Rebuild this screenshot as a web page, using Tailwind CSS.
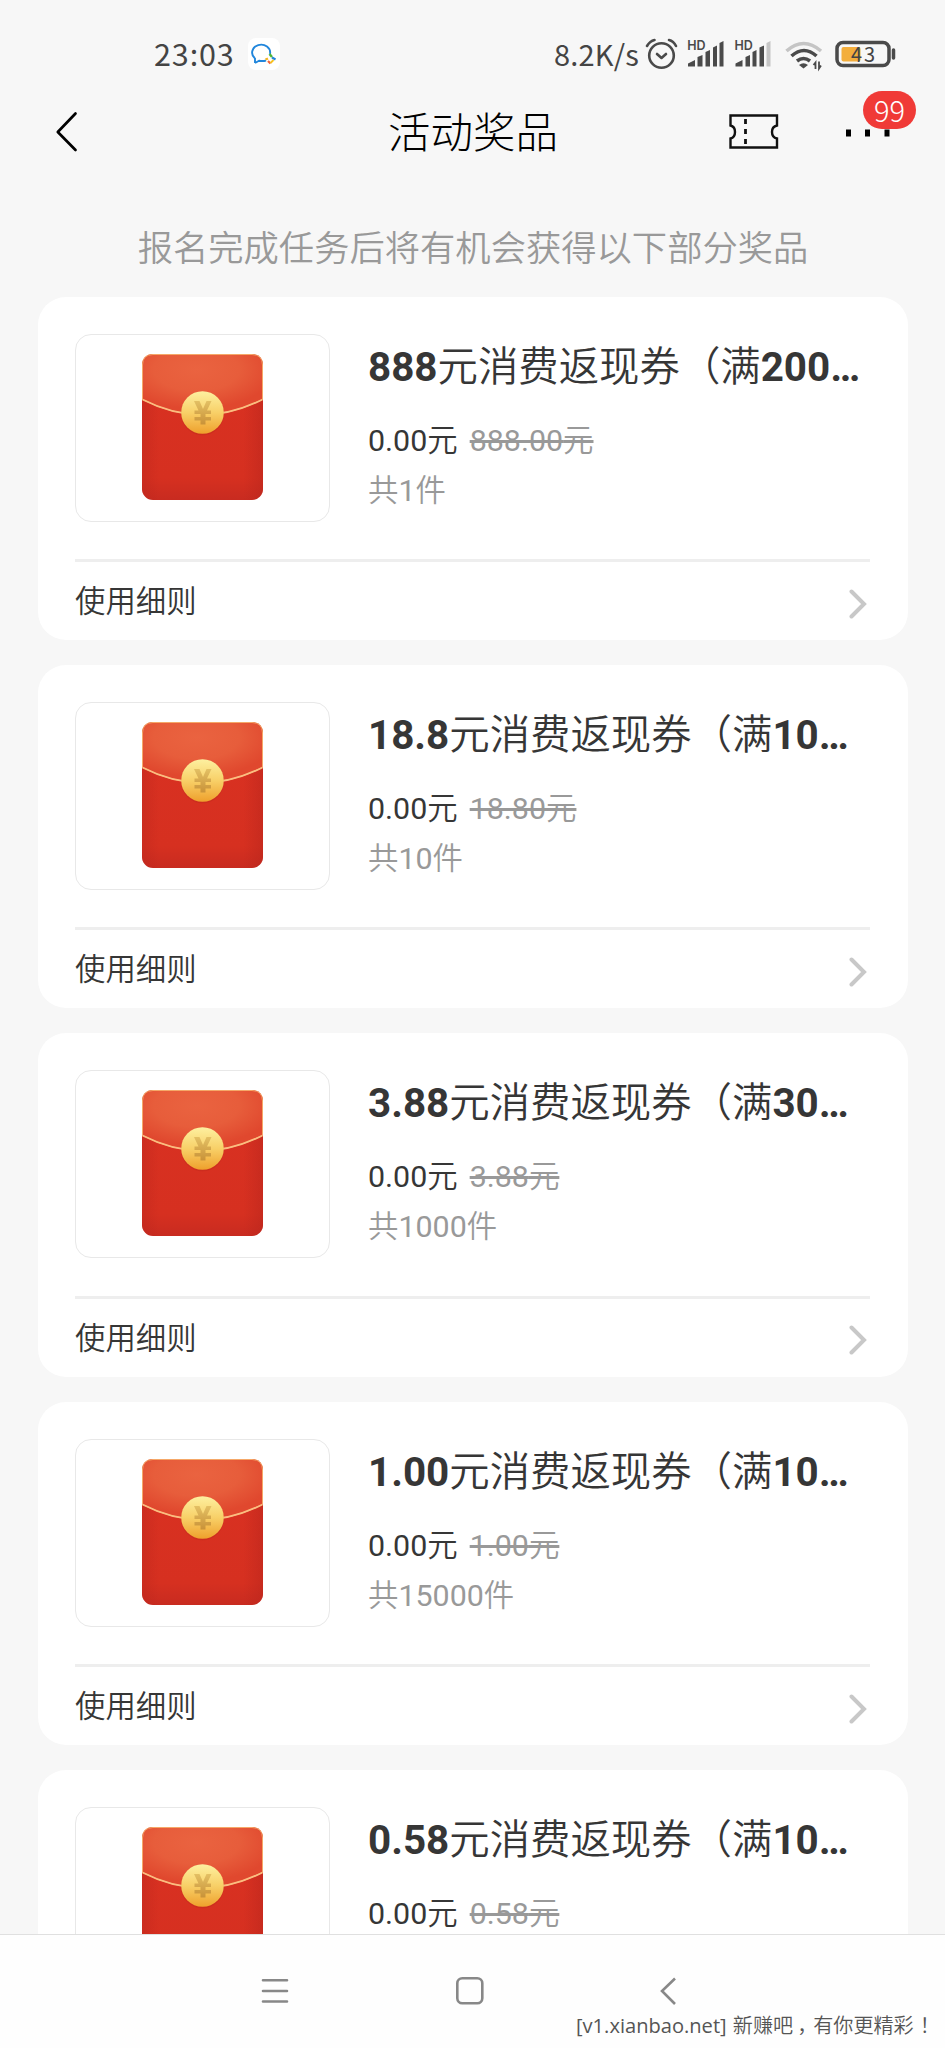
<!DOCTYPE html>
<html lang="zh-CN">
<head>
<meta charset="utf-8">
<title>活动奖品</title>
<script src="https://cdn.jsdelivr.net/npm/@tailwindcss/browser@4"></script>
</head>
<body class="bg-[#f7f7f7]">
<div class="flex h-[2048px] w-[945px] flex-col overflow-hidden font-['Roboto','Noto_Sans_CJK_SC',sans-serif] text-[#363636]">
  <!-- status bar -->
  <div class="flex h-[84px] shrink-0 items-start justify-between pt-[34px] pl-[154px] pr-[48px] font-['Noto_Sans_CJK_SC',sans-serif] text-[#444]">
    <div class="flex items-center">
      <span class="-mt-px w-[94px] text-[30.500px] leading-[40px] tracking-[0.9px]">23:03</span>
      <svg class="h-8 w-8" viewBox="0 0 32 32" fill="none">
        <rect width="32" height="32" rx="8" fill="#fff"/>
        <path d="M7 25v-4.500A9 8 0 1 1 22 16M7 25l4-2.300q4 .8 7-.2" stroke="#2186dc" stroke-width="1.900" stroke-linejoin="round"/>
        <path d="M21.500 16l2.500 3" stroke="#53b535" stroke-width="2.400"/><path d="M24 19.500l3.500 2" stroke="#2186dc" stroke-width="2.200"/><path d="M20 20.500l-2.500 1" stroke="#f7b51e" stroke-width="2.400"/><path d="M20 23l2.500 2.500" stroke="#f3663a" stroke-width="2.200"/><path d="M22.500 25l3-3" stroke="#f7c11e" stroke-width="1.800"/>
      </svg>
    </div>
    <div class="flex">
      <span class="-mt-[1px] w-[90px] whitespace-nowrap text-[29px] leading-[40px] tracking-[0.2px]">8.2K/s</span>
      <svg class="h-[40px] w-[253px]" viewBox="644 34 253 40" fill="none">
        <g stroke="#4a4a4a" stroke-width="2.600" stroke-linecap="round" stroke-linejoin="round"><circle cx="661.500" cy="55.500" r="12.300"/><path d="M657 54l4.500 4 4.500-4M647 46q3-5 7.500-6M669 40q4.500 1 7 6"/></g>
        <g fill="#4a4a4a"><path d="M688 66.500v-3l7-3.500v6.500zM697.500 57l5-2v11.500h-5zM705.500 52l4.500-2v16.500h-4.500zM713 47.500l4-2v21h-4zM719.500 43l4-2v25.500h-4z"/><path d="M735.500 66.500v-3l7-3.500v6.500zM745.500 57l4.500-2v11.500h-4.500zM752.500 52l4-2v16.500h-4zM759.500 47.500l4.500-2v21h-4.500z"/></g>
        <path d="M766.500 43l4-2v25.500h-4z" fill="#c5c5c5"/>
        <g font-family="Inter" font-weight="600" font-size="12.500" fill="#4a4a4a"><text x="687.300" y="49.500">HD</text><text x="734.500" y="49.500">HD</text></g>
        <path d="M786.500 51q17-15 34.500 0" stroke="#c5c5c5" stroke-width="3.600"/><path d="M791.500 56q12.500-11 25 0M797 61q6.500-5 13 0" stroke="#4a4a4a" stroke-width="3.600"/><path d="M799 65q4.500-3.500 9 0l-4.500 3.500z" fill="#4a4a4a"/>
        <path d="M815.500 69v-6.500l-2 2.500M819 61.500v7l2-3" stroke="#4a4a4a" stroke-width="1.800"/>
        <rect x="837" y="42.500" width="52" height="23" rx="6" stroke="#4a4a4a" stroke-width="3.500"/><rect x="841.500" y="47" width="19" height="14.500" rx="2" fill="#f3ae3c"/><path d="M893.500 50v8" stroke="#4a4a4a" stroke-width="3.500" stroke-linecap="round"/>
        <text x="851" y="62" font-family="Noto Sans CJK SC" font-size="20" textLength="24" fill="#444">43</text>
      </svg>
    </div>
  </div>
  <!-- title bar -->
  <div class="flex h-[98px] shrink-0 items-center justify-between pl-[50px] text-black">
    <svg class="h-[98px] w-[338px]" viewBox="50 84 338 98" fill="none"><path d="M75.500 113.500L57.800 132L75.500 150" stroke="#000" stroke-width="2.700" stroke-linecap="round" stroke-linejoin="round"/></svg>
    <h1 class="w-[172px] pt-[2px] whitespace-nowrap text-[42.500px] leading-[96px] font-light">活动奖品</h1>
    <div class="relative h-[98px] w-[385px]">
      <svg class="h-[98px] w-[385px]" viewBox="560 84 385 98" fill="none"><path d="M730.500 115.500h46.500v10q-5 1-5 6.500t5 6.500v9h-46.500v-9q4.500-1 4.500-6.500t-4.500-6.500z" stroke="#111" stroke-width="2.400"/><path d="M745.500 119v5M745.500 129v5M745.500 139v5" stroke="#111" stroke-width="2.800"/><path d="M846 129.500h5v7h-5zM865 129.500h5v7h-5zM884.500 129.500h5v7h-5z" fill="#000"/></svg>
      <span class="absolute top-[7px] left-[303px] h-[38px] w-[53px] rounded-full bg-[#f03a37] text-center font-['Noto_Sans_CJK_SC'] text-[29px] leading-[37px] font-light text-white">99</span>
    </div>
  </div>
  <p class="h-[114.700px] shrink-0 pt-[42px] pl-[1px] text-center text-[35.300px] leading-[50px] font-[350] text-[#999]">报名完成任务后将有机会获得以下部分奖品</p>
  <main id="cards" class="flex min-h-0 flex-1 flex-col gap-[25px] overflow-hidden px-[37.500px]"></main>
  <!-- navigation bar -->
  <nav class="relative h-[114px] shrink-0 border-t border-[#e0e0e0] bg-[#fefefe]">
    <svg class="h-[113px] w-full" viewBox="0 1935 945 113" fill="none" stroke="#888" stroke-width="2.600" stroke-linecap="round"><path d="M263 1980.300h24M263 1991h24M263 2001.500h24"/><rect x="457.300" y="1978.300" width="25" height="25" rx="5"/><path d="M675 1978.500L662 1991L675 2004" stroke-linecap="butt"/></svg>
    <p class="absolute top-[74px] left-[576px] text-[20.100px] leading-[32px] whitespace-nowrap text-[#555] font-['Open_Sans','Noto_Sans_CJK_SC',sans-serif]">[v1.xianbao.net] <span class="ml-[1px] font-[350] font-['Noto_Sans_CJK_SC']">新赚吧<span class="-mr-[4px] pl-[4px]">，</span>有你更精彩<span class="-mr-[6px] pl-[6px]">！</span></span></p>
  </nav>
</div>
<!-- gradients shared by the red packets -->
<svg class="absolute top-0 left-0 h-0 w-0">
  <defs>
    <linearGradient id="body" x1="0" y1="0" x2="0" y2="1"><stop offset="0" stop-color="#d93122"/><stop offset=".85" stop-color="#d63020"/><stop offset="1" stop-color="#c82b20"/></linearGradient>
    <linearGradient id="sides" x1="0" y1="0" x2="1" y2="0"><stop offset="0" stop-color="#b5241c" stop-opacity=".35"/><stop offset=".14" stop-color="#b5241c" stop-opacity="0"/><stop offset=".84" stop-color="#b5241c" stop-opacity="0"/><stop offset="1" stop-color="#b5241c" stop-opacity=".45"/></linearGradient>
    <radialGradient id="flap" cx=".45" cy=".25" r=".65"><stop offset="0" stop-color="#ea6340"/><stop offset=".55" stop-color="#e75d3b"/><stop offset="1" stop-color="#e0482e"/></radialGradient>
    <linearGradient id="coin" x1="0" y1="0" x2="0" y2="1"><stop offset="0" stop-color="#fdf0a0"/><stop offset=".5" stop-color="#f8d068"/><stop offset="1" stop-color="#eea02c"/></linearGradient>
    <linearGradient id="yen" x1="0" y1="0" x2="0" y2="1"><stop offset="0" stop-color="#e3c064"/><stop offset="1" stop-color="#c99238"/></linearGradient>
  </defs>
</svg>
<script>
const prizes = [
  ['888', '200', '888.00', 1],
  ['18.8', '10', '18.80', 10],
  ['3.88', '30', '3.88', 1000],
  ['1.00', '10', '1.00', 15000],
  ['0.58', '10', '0.58'],
];
document.getElementById('cards').innerHTML = prizes.map(([amount, min, price, count]) => `
  <section class="h-[343.400px] shrink-0 rounded-[28px] bg-white px-[37.500px] pt-[37px]">
    <div class="flex h-[225.400px] gap-[38.500px]">
      <div class="flex h-[188px] w-[254.500px] shrink-0 justify-center rounded-[16px] border border-[#e8e8e8] pt-[19px]">
        <svg class="h-[146px] w-[121px]" viewBox="0 0 121 146">
          <rect width="121" height="146" rx="11" fill="url(#body)"/><rect width="121" height="146" rx="11" fill="url(#sides)"/>
          <path d="M.5 45.500V11Q.5.5 11 .5H110Q120.500.5 120.500 11V45.500Q60 76 .5 45.500z" fill="url(#flap)" stroke="#f5a868" stroke-width="1"/>
          <path d="M.5 45.500Q60 76 120.500 45.500" fill="none" stroke="#fbbd80" stroke-width="1.800"/>
          <circle cx="60.500" cy="60" r="21.300" fill="#b5241c" opacity=".3"/>
          <circle cx="60.500" cy="58.500" r="21.300" fill="url(#coin)"/>
          <path d="M52 47h5.500l3.500 8 3.500-8h5l-4.500 9.500h4v3.500h-5.500v3h5.500v3.500h-5.500v4h-5v-4h-6v-3.500h6v-3h-6v-3.500h4z" fill="url(#yen)"/>
        </svg>
      </div>
      <div class="whitespace-nowrap">
        <h2 class="mt-[6px] text-[40.400px] leading-[56px] font-[350]"><span class="font-bold">${amount}</span>元消费返现券（满<span class="font-bold">${min}…</span></h2>
        <p class="mt-[21px] flex gap-[12px] text-[30.400px] leading-[48px]"><span>0.00<span class="font-[350]">元</span></span><s class="text-[#999]">${price}<span class="font-[350]">元</span></s></p>
        ${count ? `<p class="mt-[2px] text-[30.400px] leading-[48px] text-[#999]"><span class="font-[350]">共</span>${count}<span class="font-[350]">件</span></p>` : ''}
      </div>
    </div>
    ${count ? `<div class="flex h-[81px] items-center justify-between border-t-[3px] border-[#eee]">
      <span class="pt-[2px] text-[30.400px] leading-[48px] font-[350]">使用细则</span>
      <svg class="mt-[5px] mr-[3px] h-[30px] w-[18px]" viewBox="0 0 18 30" fill="none"><path d="M2.500 2.500L15 15L2.500 27.500" stroke="#c8c8c8" stroke-width="4" stroke-linecap="round"/></svg>
    </div>` : ''}
  </section>`).join('');
</script>
</body>
</html>
